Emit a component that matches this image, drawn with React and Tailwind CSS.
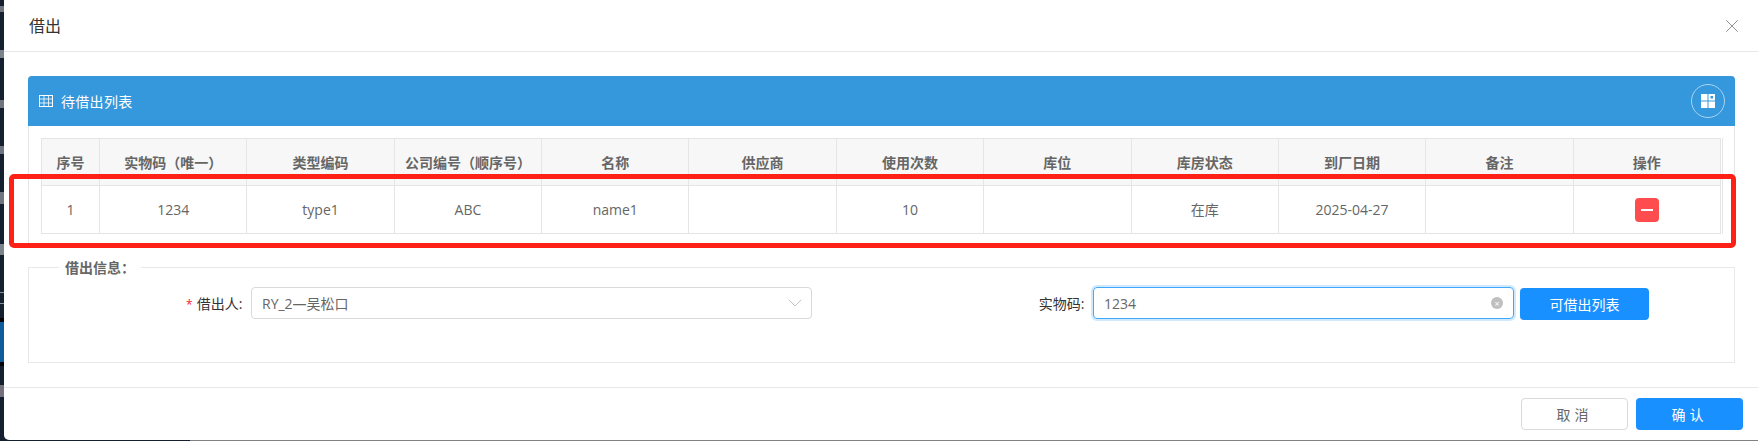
import { X, ChevronDown } from 'lucide-react';

const COLUMNS = ['序号', '实物码（唯一）', '类型编码', '公司编号（顺序号）', '名称', '供应商', '使用次数', '库位', '库房状态', '到厂日期', '备注', '操作'];
const ROW = ['1', '1234', 'type1', 'ABC', 'name1', '', '10', '', '在库', '2025-04-27', ''];
const FONT = 'font-["Open_Sans","Noto_Sans_CJK_SC",sans-serif]';

// what shows of the page behind the modal, top to bottom
const STRIP = [
  { h: 'h-[6px]', bg: 'bg-[#14202f]' },
  { h: 'h-[6px]', bg: 'bg-[#6f7680]' },
  { h: 'h-[38px]', bg: 'bg-[#14202f]' },
  { h: 'h-[8px]', bg: 'bg-[#7d838b]' },
  { h: 'h-[42px]', bg: 'bg-[#14202f]' },
  { h: 'h-[8px]', bg: 'bg-[#6f7680]' },
  { h: 'h-[38px]', bg: 'bg-[#14202f]' },
  { h: 'h-[8px]', bg: 'bg-[#6f7680]' },
  { h: 'h-[38px]', bg: 'bg-[#14202f]' },
  { h: 'h-[12px]', bg: 'bg-[#6f7680]' },
  { h: 'h-[40px]', bg: 'bg-[#14202f]' },
  { h: 'h-[11px]', bg: 'bg-[#7d838b]' },
  { h: 'h-[37px]', bg: 'bg-[#14202f]' },
  { h: 'h-[1px]', bg: 'bg-[#8b9098]' },
  { h: 'h-[10px]', bg: 'bg-[#14202f]' },
  { h: 'h-[1px]', bg: 'bg-[#8b9098]' },
  { h: 'h-[14px]', bg: 'bg-[#14202f]' },
  { h: 'h-[4px]', bg: 'bg-[#050505]' },
  { h: 'h-[40px]', bg: 'bg-[#0f5c9c]' },
  { h: 'h-[4px]', bg: 'bg-[#050505]' },
  { h: 'h-[19px]', bg: 'bg-[#14202f]' },
  { h: 'h-[12px]', bg: 'bg-[#75707c]' },
  { h: 'h-[43px]', bg: 'bg-[#14202f]' },
];

function TableIcon() {
  return (
    <svg width="14" height="12" viewBox="0 0 14 12" fill="none" stroke="#fff" strokeWidth="1">
      <rect x="0.5" y="0.5" width="13" height="11" />
      <path d="M0.5 4H13.5M0.5 8H13.5M5 0.5V11.5M9.5 0.5V11.5" strokeOpacity="0.8" />
    </svg>
  );
}

function LayoutIcon() {
  return (
    <svg width="14" height="14" viewBox="0 0 14 14" fill="#fff">
      <rect x="0" y="0" width="6.5" height="6.5" />
      <path fillRule="evenodd" d="M7.5 0H14V6.5H7.5ZM9.5 2V4.5H12V2Z" />
      <rect x="0" y="7.5" width="6.5" height="6.5" />
      <rect x="7.5" y="7.5" width="6.5" height="6.5" />
    </svg>
  );
}

export default function App() {
  return (
    <div className={`${FONT} relative flex flex-col w-[1758px] h-[441px] overflow-hidden bg-[#14202f]`}>
      <div className="flex h-[440px]">
        {/* page behind the modal */}
        <div className="w-[4px] h-full flex flex-col">
          {STRIP.map((s, i) => (
            <div key={i} className={`${s.h} ${s.bg}`} />
          ))}
        </div>

        <div className="w-[1754px] h-[440px] flex flex-col bg-white rounded-bl-[5px] text-[14px]">
          <div className="h-[52px] shrink-0 flex items-center justify-between pl-[25px] pr-[15px] border-b border-[#e8e8e8]">
            <span className="text-[16px] text-[#333]">借出</span>
            <X size={22} strokeWidth={1} className="text-[#888]" />
          </div>

          <div className="flex-1 pt-[24px] pl-[24px] pr-[23px]">
            <div className="h-[170px] rounded-t-[4px] border-x border-b border-[#e4e4e4]">
              <div className="h-[50px] -mx-px flex items-center justify-between pl-[11px] pr-[10px] bg-[#3598dc] rounded-t-[4px] text-white">
                <div className="flex items-center gap-[8px]">
                  <TableIcon />
                  <span className="tracking-[0.3px]">待借出列表</span>
                </div>
                <div className="w-[34px] h-[34px] rounded-full border border-[#a9d3f0] flex items-center justify-center">
                  <LayoutIcon />
                </div>
              </div>

              <div className="mt-[12px] ml-[12px] mr-[11px] border-r border-[#e5e5e5] pr-px">
                <table className="w-full table-fixed border-collapse text-center">
                  <colgroup>
                    <col className="w-[58px]" />
                  </colgroup>
                  <thead>
                    <tr className="h-[47px] bg-[#f7f7f7]">
                      {COLUMNS.map((c) => (
                        <th key={c} className="border border-[#e5e5e5] px-0 font-semibold text-[#666]">{c}</th>
                      ))}
                    </tr>
                  </thead>
                  <tbody>
                    <tr className="h-[48px]">
                      {ROW.map((v, i) => (
                        <td key={i} className="border border-[#e5e5e5] text-[#666]">{v}</td>
                      ))}
                      <td className="border border-[#e5e5e5]">
                        <button className="inline-flex items-center justify-center w-[24px] h-[24px] rounded-[4px] bg-[#ff4d4f] align-middle">
                          <span className="block w-[12px] h-[2px] bg-white" />
                        </button>
                      </td>
                    </tr>
                  </tbody>
                </table>
              </div>
            </div>

            <fieldset className="mt-[11px] h-[106px] border border-[#e8e8e8]">
              <legend className="ml-[30px] px-[6px] font-semibold text-[#666]">借出信息：</legend>
              <div className="flex items-center mt-[8px] pl-[132px]">
                <label className="w-[85px] mr-[5px] text-right text-[#333] whitespace-nowrap">
                  <span className="text-[12px] text-[#f5222d] mr-[4px]">*</span>借出人:&nbsp;
                </label>
                <div className="w-[561px] h-[32px] flex items-center justify-between pl-[10px] pr-[4px] border border-[#d9d9d9] rounded-[4px] text-[#666]">
                  <span>RY_2—吴松口</span>
                  <ChevronDown size={24} strokeWidth={0.8} className="text-[#b5b5b5]" />
                </div>
                <label className="w-[276px] mr-[5px] text-right text-[#333] whitespace-nowrap">实物码:&nbsp;</label>
                <div className="w-[421px] h-[32px] flex items-center justify-between pl-[10px] pr-[10px] border border-[#40a9ff] rounded-[4px] shadow-[0_0_0_2px_rgba(24,144,255,0.2)] text-[#666]">
                  <span>1234</span>
                  <span className="w-[12px] h-[12px] rounded-full bg-[#bfbfbf] flex items-center justify-center text-[9px] leading-none text-white">×</span>
                </div>
                <button className="ml-[6px] w-[129px] h-[32px] mt-[2px] rounded-[4px] bg-[#1890ff] text-white">可借出列表</button>
              </div>
            </fieldset>
          </div>

          <div className="h-[53px] shrink-0 flex justify-end items-start gap-[8px] pt-[10px] pr-[15px] border-t border-[#e8e8e8]">
            <button className="w-[107px] h-[32px] border border-[#d9d9d9] rounded-[4px] text-[#666] tracking-[4px]">取消</button>
            <button className="w-[107px] h-[32px] rounded-[4px] bg-[#1890ff] text-white tracking-[4px]">确认</button>
          </div>
        </div>
      </div>

      <div className="flex h-[1px]">
        <div className="w-[190px] bg-[#14202f]" />
        <div className="flex-1 bg-[#808080]" />
      </div>

      {/* red annotation box drawn over the screenshot */}
      <div className="absolute left-[9px] top-[174px] w-[1727px] h-[74px] border-[5px] border-[#ff2116] rounded-[5px] pointer-events-none" />
    </div>
  );
}
